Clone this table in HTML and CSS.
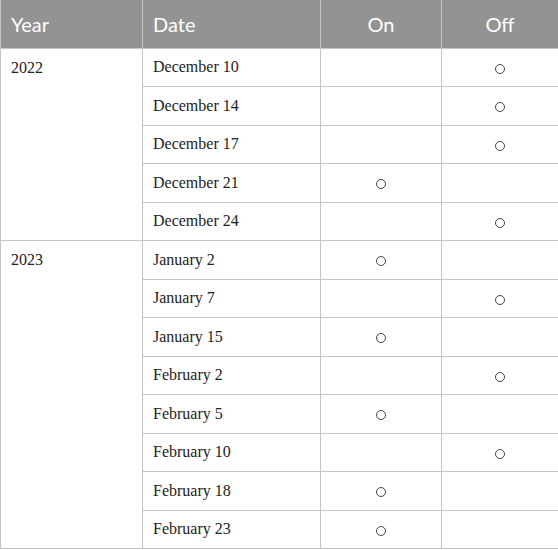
FILE: index.html
```html
<!DOCTYPE html>
<html>
<head>
<meta charset="utf-8">
<link rel="stylesheet" href="styles.css">
</head>
<body>
<table class="tbl">
  <colgroup>
    <col class="c-year"><col class="c-date"><col class="c-on"><col class="c-off">
  </colgroup>
  <thead>
    <tr><th class="left">Year</th><th class="left">Date</th><th>On</th><th>Off</th></tr>
  </thead>
  <tbody>
    <tr><td rowspan="5" class="year">2022</td><td>December 10</td><td class="mark"></td><td class="mark"><span class="o"></span></td></tr>
    <tr><td>December 14</td><td class="mark"></td><td class="mark"><span class="o"></span></td></tr>
    <tr><td>December 17</td><td class="mark"></td><td class="mark"><span class="o"></span></td></tr>
    <tr><td>December 21</td><td class="mark"><span class="o"></span></td><td class="mark"></td></tr>
    <tr><td>December 24</td><td class="mark"></td><td class="mark"><span class="o"></span></td></tr>
    <tr><td rowspan="8" class="year">2023</td><td>January 2</td><td class="mark"><span class="o"></span></td><td class="mark"></td></tr>
    <tr><td>January 7</td><td class="mark"></td><td class="mark"><span class="o"></span></td></tr>
    <tr><td>January 15</td><td class="mark"><span class="o"></span></td><td class="mark"></td></tr>
    <tr><td>February 2</td><td class="mark"></td><td class="mark"><span class="o"></span></td></tr>
    <tr><td>February 5</td><td class="mark"><span class="o"></span></td><td class="mark"></td></tr>
    <tr><td>February 10</td><td class="mark"></td><td class="mark"><span class="o"></span></td></tr>
    <tr><td>February 18</td><td class="mark"><span class="o"></span></td><td class="mark"></td></tr>
    <tr><td>February 23</td><td class="mark"><span class="o"></span></td><td class="mark"></td></tr>
  </tbody>
</table>
</body>
</html>
```
FILE: styles.css
```css
html, body { margin: 0; padding: 0; background: #fff; }
.tbl {
  width: 558px;
  border-collapse: collapse;
  table-layout: fixed;
}
.c-year { width: 142px; }
.c-date { width: 178px; }
.c-on { width: 121px; }
.c-off { width: 117px; }
.tbl th {
  background: #939393;
  color: #fff;
  font-family: Lato, "Open Sans", sans-serif;
  font-weight: 400;
  font-size: 20px;
  height: 48px;
  padding: 0 10px;
  text-align: center;
  border: 1px solid #c4c4c4;
  border-top: 0;
  box-sizing: border-box;
}
.tbl th.left { text-align: left; }
.tbl td {
  font-family: "Liberation Serif", "Times New Roman", serif;
  font-size: 16px;
  color: #222;
  height: 38.5px;
  padding: 0 10px;
  border: 1px solid #c4c4c4;
  box-sizing: border-box;
  vertical-align: middle;
}
.tbl td.year { vertical-align: top; padding-top: 10px; }
.tbl td.mark { text-align: center; padding: 0; }
.o {
  display: inline-block;
  width: 10px;
  height: 10px;
  border: 1px solid #444;
  border-radius: 50%;
  vertical-align: middle;
  box-sizing: border-box;
}
```
